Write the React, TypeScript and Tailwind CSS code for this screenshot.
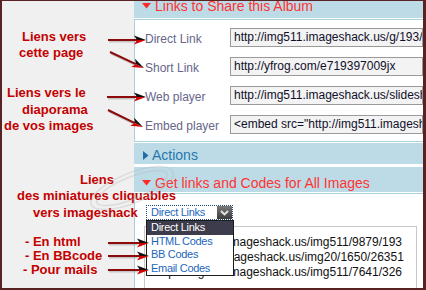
type Pt = { x1: number; y1: number; x2: number; y2: number };

const arrows: Pt[] = [
  { x1: 108, y1: 40, x2: 146, y2: 40 },
  { x1: 110, y1: 52, x2: 144, y2: 68 },
  { x1: 107, y1: 97, x2: 146, y2: 97 },
  { x1: 108, y1: 110, x2: 143, y2: 127 },
  { x1: 108, y1: 243, x2: 149, y2: 243 },
  { x1: 108, y1: 256, x2: 149, y2: 256 },
  { x1: 108, y1: 270, x2: 149, y2: 270 },
];

const Arrow = ({ x1, y1, x2, y2 }: Pt) => {
  const len = Math.hypot(x2 - x1, y2 - y1);
  const dx = (x2 - x1) / len;
  const dy = (y2 - y1) / len;
  // normal pointing "up" for a left-to-right arrow
  const nx = dy;
  const ny = -dx;
  const hl = 12;
  const hw = 4.5;
  const bx = x2 - dx * hl;
  const by = y2 - dy * hl;
  const nbx = x2 - dx * (hl - 3);
  const nby = y2 - dy * (hl - 3);
  return (
    <g>
      <line x1={x1 + 1} y1={y1 + 1.5} x2={bx + 1} y2={by + 1.5} stroke="rgba(0,0,0,0.18)" strokeWidth={2} />
      <line x1={x1} y1={y1} x2={nbx} y2={nby} stroke="#8c0a0a" strokeWidth={2} />
      <polygon
        points={`${x2},${y2} ${bx + nx * hw},${by + ny * hw} ${nbx},${nby}`}
        fill="#151010"
      />
      <polygon
        points={`${x2},${y2} ${nbx},${nby} ${bx - nx * hw},${by - ny * hw}`}
        fill="#d60000"
      />
    </g>
  );
};

const TriDown = ({ color }: { color: string }) => (
  <svg width="9" height="6" viewBox="0 0 9 6" className="shrink-0">
    <polygon points="0,0 9,0 4.5,5.5" fill={color} />
  </svg>
);

const TriRight = () => (
  <svg width="6" height="9" viewBox="0 0 6 9" className="shrink-0">
    <polygon points="0,0 5.5,4.5 0,9" fill="#1f6ea8" />
  </svg>
);

const rows = [
  { label: "Direct Link", value: "http://img511.imageshack.us/g/193/e719397009jx/" },
  { label: "Short Link", value: "http://yfrog.com/e719397009jx" },
  { label: "Web player", value: "http://img511.imageshack.us/slideshow/webplayer.php?id=" },
  { label: "Embed player", value: '<embed src="http://img511.imageshack.us/slideshow/' },
];

const codeLines = [
  "http://img511.imageshack.us/img511/9879/193",
  "http://img20.imageshack.us/img20/1650/26351",
  "http://img511.imageshack.us/img511/7641/326",
];

export default function App() {
  return (
    <div
      className="w-[426px] h-[290px] overflow-hidden bg-[#f0f0f0] border-[#5a2323] border-t border-l-2 border-r-[3px] border-b-2"
      style={{ fontFamily: '"Liberation Sans", Arial, sans-serif' }}
    >
      <div className="relative flex h-full">
        {/* Left annotations */}
        <div className="w-[132px] shrink-0 relative z-10 bg-[#f0f0f0] text-[13px] font-bold text-[#c40000] whitespace-nowrap">
          <div className="pt-[28px] leading-[16px]">
            <p className="ml-[20px]">Liens vers</p>
            <p className="ml-[17px]">cette page</p>
          </div>
          <div className="mt-[24px] leading-[16.5px]">
            <p className="ml-[5px]">Liens vers le</p>
            <p className="ml-[20px]">diaporama</p>
            <p className="ml-[2px]">de vos images</p>
          </div>
          <div className="mt-[37px] leading-[16.5px]">
            <p className="ml-[78px]">Liens</p>
            <p className="ml-[15px]">des miniatures cliquables</p>
            <p className="ml-[31px]">vers imageshack</p>
          </div>
          <div className="mt-[14px] leading-[14px]">
            <p className="ml-[23px]">- En html</p>
            <p className="ml-[23px]">- En BBcode</p>
            <p className="ml-[21px]">- Pour mails</p>
          </div>
        </div>

        {/* Right panel */}
        <div className="flex-1 overflow-hidden bg-white">
          <div className="w-[300px]">
            <div className="h-[17px] bg-[#bddbe6] flex items-start pl-[8px] overflow-hidden">
              <div className="mt-[2px]">
                <TriDown color="#ff2a2a" />
              </div>
              <span className="ml-[4px] -mt-[2px] text-[14px] leading-[14px] text-[#ff3333] whitespace-nowrap">
                Links to Share this Album
              </span>
            </div>
            <div className="mt-[1px] border border-[#a9d2df] pt-[8px] pb-[7px] pl-[10px] flex flex-col gap-[10px]">
              {rows.map((r) => (
                <div key={r.label} className="flex items-center h-[19px]">
                  <span className="w-[85px] shrink-0 text-[12px] pt-[3px] text-[#66668a]">{r.label}</span>
                  <div className="w-[193px] h-[19px] shrink-0 border border-[#9a9a9a] bg-[#f3f3f3] pl-[3px] text-[12px] leading-[17px] text-[#10102a] whitespace-nowrap overflow-hidden">
                    {r.value}
                  </div>
                </div>
              ))}
            </div>

            <div className="mt-[1px] h-[21px] bg-[#bddbe6] flex items-center pl-[9px] pt-[3px]">
              <TriRight />
              <span className="ml-[3px] text-[14px] leading-[16px] text-[#2677b0]">Actions</span>
            </div>

            <div className="mt-[3px] h-[25px] bg-[#bddbe6] flex items-center pl-[8px] pt-[6px]">
              <TriDown color="#ff2a2a" />
              <span className="ml-[4px] text-[14px] leading-[16px] text-[#ff3333] whitespace-nowrap">
                Get links and Codes for All Images
              </span>
            </div>

            <div className="mt-[1px] h-[120px] border border-[#a9d2df] pt-[11px] relative">
              {/* select */}
              <div className="ml-[11px] w-[87px] h-[15px] border border-dotted border-[#1d4a78] flex items-center bg-white">
                <span className="flex-1 pl-[4px] text-[11px] leading-[13px] tracking-[-0.3px] text-[#2266bb]">Direct Links</span>
                <div className="w-[15px] h-[13px] bg-gradient-to-b from-[#7a7a7a] to-[#3c3c3c] flex items-center justify-center">
                  <svg width="9" height="6" viewBox="0 0 9 6">
                    <polyline points="1,1 4.5,4.5 8,1" fill="none" stroke="#dfe6ee" strokeWidth="1.8" />
                  </svg>
                </div>
              </div>

              {/* textarea */}
              <div className="ml-[9px] mt-[6px] w-[273px] h-[80px] border border-[#c8c8c8] pt-[8px] pl-[10px] overflow-hidden text-[12px] leading-[15px] text-[#111] whitespace-nowrap">
                {codeLines.map((l) => (
                  <div key={l}>{l}</div>
                ))}
              </div>

              {/* open dropdown list */}
              <div className="absolute left-[11px] top-[26px] w-[88px] border border-[#1c1c1c] bg-white text-[11px] leading-[13.5px] tracking-[-0.3px]">
                <div className="bg-[#3c3c4c] text-white pl-[4px]">Direct Links</div>
                <div className="text-[#2266bb] pl-[4px]">HTML Codes</div>
                <div className="text-[#2266bb] pl-[4px]">BB Codes</div>
                <div className="text-[#2266bb] pl-[4px]">Email Codes</div>
              </div>
            </div>
          </div>
        </div>

        {/* arrows and faint watermark */}
        <svg
          className="absolute left-[-2px] top-[-1px] pointer-events-none z-20"
          width="426"
          height="290"
          viewBox="0 0 426 290"
        >
          <g opacity="0.35" fill="none" stroke="#b8b8b8" strokeWidth="1.5">
            <ellipse cx="132" cy="188" rx="44" ry="15" transform="rotate(-22 132 188)" />
            <ellipse cx="132" cy="188" rx="38" ry="11" transform="rotate(-22 132 188)" />
          </g>
          {arrows.map((a, i) => (
            <Arrow key={i} {...a} />
          ))}
        </svg>
      </div>
    </div>
  );
}
